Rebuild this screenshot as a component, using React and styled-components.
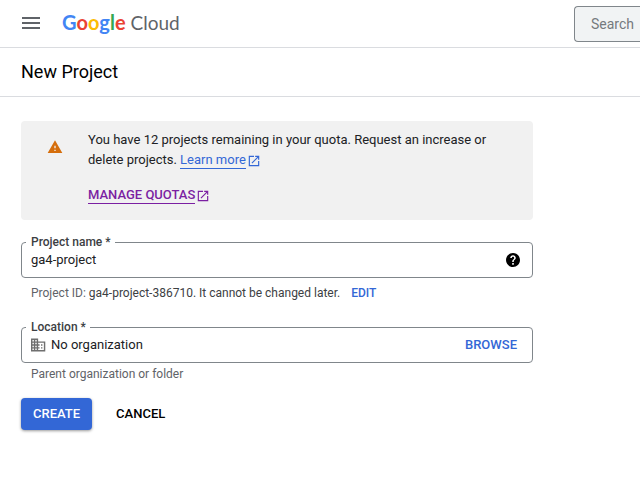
import React, { useState } from "react";
import styled, { createGlobalStyle } from "styled-components";

const GlobalStyle = createGlobalStyle`
  *, *::before, *::after { box-sizing: border-box; }
  body {
    margin: 0;
    background: #fff;
    color: #202124;
    font-family: Roboto, "Liberation Sans", sans-serif;
    font-size: 13px;
    line-height: 20px;
  }
  button, input { font: inherit; color: inherit; }
`;

const Header = styled.header`
  display: flex;
  align-items: center;
  height: 48px;
  padding-left: 21px;
  border-bottom: 1px solid #dadce0;
`;

const MenuButton = styled.button`
  display: flex;
  margin: 0 21px 0 0;
  padding: 0;
  border: 0;
  background: none;
  color: #5f6368;
  cursor: pointer;
`;

const Logo = styled.a`
  display: flex;
  align-items: baseline;
  gap: 5px;
  margin-right: auto;
  padding-bottom: 2px;
  color: #5f6368;
  font-family: Lato, sans-serif;
  font-size: 19px;
  line-height: 24px;
  text-decoration: none;
  white-space: nowrap;
`;

const Wordmark = styled.span`
  font-size: 20px;
  font-weight: 700;
`;

const Letter = styled.span`
  color: ${({ $color }) => $color};
`;

const SearchBox = styled.input`
  flex: 0 0 66px;
  min-width: 0;
  height: 36px;
  padding: 0 0 0 16px;
  border: 1px solid #80868b;
  border-right: 0;
  border-radius: 4px 0 0 4px;
  background: #f1f3f4;
  font-size: 14px;
  outline: none;

  &::placeholder { color: #757a7e; opacity: 1; }
`;

const TitleBar = styled.div`
  padding: 12px 21px;
  border-bottom: 1px solid #dadce0;
`;

const Title = styled.h1`
  margin: 0;
  color: #000;
  font-size: 18px;
  font-weight: 400;
  line-height: 24px;
`;

const Form = styled.form`
  max-width: 554px;
  padding: 24px 21px;
`;

const Notice = styled.section`
  display: flex;
  gap: 25px;
  padding: 9px 40px 15px 26px;
  border-radius: 4px;
  background: #f1f1f1;
`;

const NoticeIcon = styled.div`
  flex: none;
  padding-top: 9px;
  color: #d56e0c;
  svg { display: block; }
`;

const NoticeText = styled.p`
  margin: 0 0 15px;
`;

const ExternalLink = styled.a`
  display: inline-flex;
  align-items: center;
  gap: 1px;
  color: ${({ $visited }) => ($visited ? "#7b1fa2" : "#3367d6")};
  font-weight: ${({ $visited }) => ($visited ? 500 : 400)};
  line-height: 16px;
  text-decoration: none;
`;

const LinkText = styled.span`
  border-bottom: 1px solid currentColor;
`;

const Field = styled.div`
  margin-top: ${({ $first }) => ($first ? "14px" : "16px")};
`;

const Outline = styled.fieldset`
  display: flex;
  align-items: center;
  min-width: 0;
  margin: 0;
  padding: 0 11px 7px 9px;
  border: 1px solid #80868b;
  border-radius: 4px;
`;

const Legend = styled.legend`
  margin-left: -5px;
  padding: 0 4px 0 5px;
  color: #3c4043;
  font-size: 12px;
  font-weight: 500;
  line-height: 16px;
`;

const FieldInput = styled.input`
  flex: 1;
  min-width: 0;
  height: 20px;
  padding: 0;
  border: 0;
  background: none;
  outline: none;
`;

const FieldIcon = styled.span`
  display: flex;
  margin-right: 5px;
  color: #6f6f6f;
`;

const IconButton = styled.button`
  display: flex;
  padding: 0;
  border: 0;
  background: none;
  color: #000;
  cursor: pointer;
`;

const TextButton = styled.button`
  padding: 0 ${({ $inset }) => ($inset ? "4px" : "0")};
  border: 0;
  background: none;
  color: ${({ $dark }) => ($dark ? "#000" : "#3367d6")};
  font-weight: 500;
  cursor: pointer;
`;

const Hint = styled.div`
  display: flex;
  gap: 11px;
  margin-top: ${({ $tight }) => ($tight ? "1px" : "5px")};
  padding-left: 10px;
  color: #5f6368;
  font-size: 12px;
  line-height: 20px;
`;

const ProjectId = styled.span`
  color: #3c4043;
`;

const Actions = styled.div`
  display: flex;
  gap: 24px;
  margin-top: 14px;
`;

const PrimaryButton = styled.button`
  height: 32px;
  padding: 0 12px;
  border: 0;
  border-radius: 4px;
  background: #3367d6;
  box-shadow: 0 1px 3px rgba(0, 0, 0, 0.4);
  color: #fff;
  font-weight: 500;
  cursor: pointer;
`;

function MenuIcon() {
  return (
    <svg width="20" height="13" viewBox="0 0 20 13" fill="currentColor" aria-hidden="true">
      <path d="M1 0h18v2H1zM1 5h18v2H1zM1 10h18v2H1z" />
    </svg>
  );
}

function WarningIcon() {
  return (
    <svg width="16" height="16" viewBox="0 0 24 24" fill="currentColor" aria-hidden="true">
      <path d="M1 21h22L12 2 1 21zm12-3h-2v-2h2v2zm0-4h-2v-4h2v4z" />
    </svg>
  );
}

function OpenIcon() {
  return (
    <svg width="14" height="14" viewBox="0 0 24 24" fill="currentColor" aria-hidden="true">
      <path d="M19 19H5V5h7V3H3v18h18v-9h-2v7zM14 3v2h3.59l-9.83 9.83 1.41 1.41L19 6.41V10h2V3h-7z" />
    </svg>
  );
}

function HelpIcon() {
  return (
    <svg width="16" height="16" viewBox="0 0 24 24" fill="currentColor" aria-hidden="true">
      <path d="M12 1.5C6.2 1.5 1.5 6.2 1.5 12S6.200 22.500 12 22.500 22.500 17.800 22.500 12 17.800 1.500 12 1.500zm1.200 17.500h-2.400v-2.400h2.400v2.400zm1.870-7.750l-.9.92C13.450 12.900 13.200 13.500 13.200 15h-2.400v-.5c0-1.100.45-2.100 1.170-2.830l1.240-1.260c.37-.36.59-.86.59-1.410 0-1-.8-1.800-1.800-1.800s-1.800.8-1.800 1.800H7.800c0-2.210 1.990-4.200 4.200-4.200s4.200 1.990 4.200 4.200c0 .88-.46 1.680-1.130 2.250z" />
    </svg>
  );
}

function OrganizationIcon() {
  return (
    <svg width="15" height="16" viewBox="2 1 21 22" fill="currentColor" aria-hidden="true">
      <path d="M12 7V3H2v18h20V7H12zM6 19H4v-2h2v2zm0-4H4v-2h2v2zm0-4H4V9h2v2zm0-4H4V5h2v2zm4 12H8v-2h2v2zm0-4H8v-2h2v2zm0-4H8V9h2v2zm0-4H8V5h2v2zm10 12h-8v-2h2v-2h-2v-2h2v-2h-2V9h8v10zm-2-8h-2v2h2v-2zm0 4h-2v2h2v-2z" />
    </svg>
  );
}

const LOGO_LETTERS = [
  ["G", "#4285f4"],
  ["o", "#ea4335"],
  ["o", "#fbbc04"],
  ["g", "#4285f4"],
  ["l", "#34a853"],
  ["e", "#ea4335"],
];

export default function App() {
  const [name, setName] = useState("ga4-project");
  const [location, setLocation] = useState("No organization");

  return (
    <>
      <GlobalStyle />
      <Header>
        <MenuButton type="button" aria-label="Main menu">
          <MenuIcon />
        </MenuButton>
        <Logo href="#home">
          <Wordmark>
            {LOGO_LETTERS.map(([letter, color], i) => (
              <Letter key={i} $color={color}>
                {letter}
              </Letter>
            ))}
          </Wordmark>
          <span>Cloud</span>
        </Logo>
        <SearchBox type="text" placeholder="Search" aria-label="Search" />
      </Header>
      <TitleBar>
        <Title>New Project</Title>
      </TitleBar>
      <Form onSubmit={(e) => e.preventDefault()}>
        <Notice>
          <NoticeIcon>
            <WarningIcon />
          </NoticeIcon>
          <div>
            <NoticeText>
              You have 12 projects remaining in your quota. Request an increase or delete
              projects.{" "}
              <ExternalLink href="#learn-more">
                <LinkText>Learn more</LinkText>
                <OpenIcon />
              </ExternalLink>
            </NoticeText>
            <ExternalLink href="#quotas" $visited>
              <LinkText>MANAGE QUOTAS</LinkText>
              <OpenIcon />
            </ExternalLink>
          </div>
        </Notice>

        <Field $first>
          <Outline>
            <Legend>
              <label htmlFor="project-name">Project name *</label>
            </Legend>
            <FieldInput
              id="project-name"
              value={name}
              onChange={(e) => setName(e.target.value)}
            />
            <IconButton type="button" aria-label="Help">
              <HelpIcon />
            </IconButton>
          </Outline>
          <Hint>
            <span>
              Project ID: <ProjectId>ga4-project-386710. It cannot be changed later.</ProjectId>
            </span>
            <TextButton type="button">EDIT</TextButton>
          </Hint>
        </Field>

        <Field>
          <Outline>
            <Legend>
              <label htmlFor="location">Location *</label>
            </Legend>
            <FieldIcon>
              <OrganizationIcon />
            </FieldIcon>
            <FieldInput
              id="location"
              value={location}
              onChange={(e) => setLocation(e.target.value)}
            />
            <TextButton type="button" $inset>
              BROWSE
            </TextButton>
          </Outline>
          <Hint $tight>Parent organization or folder</Hint>
        </Field>

        <Actions>
          <PrimaryButton type="submit">CREATE</PrimaryButton>
          <TextButton type="button" $dark>
            CANCEL
          </TextButton>
        </Actions>
      </Form>
    </>
  );
}
